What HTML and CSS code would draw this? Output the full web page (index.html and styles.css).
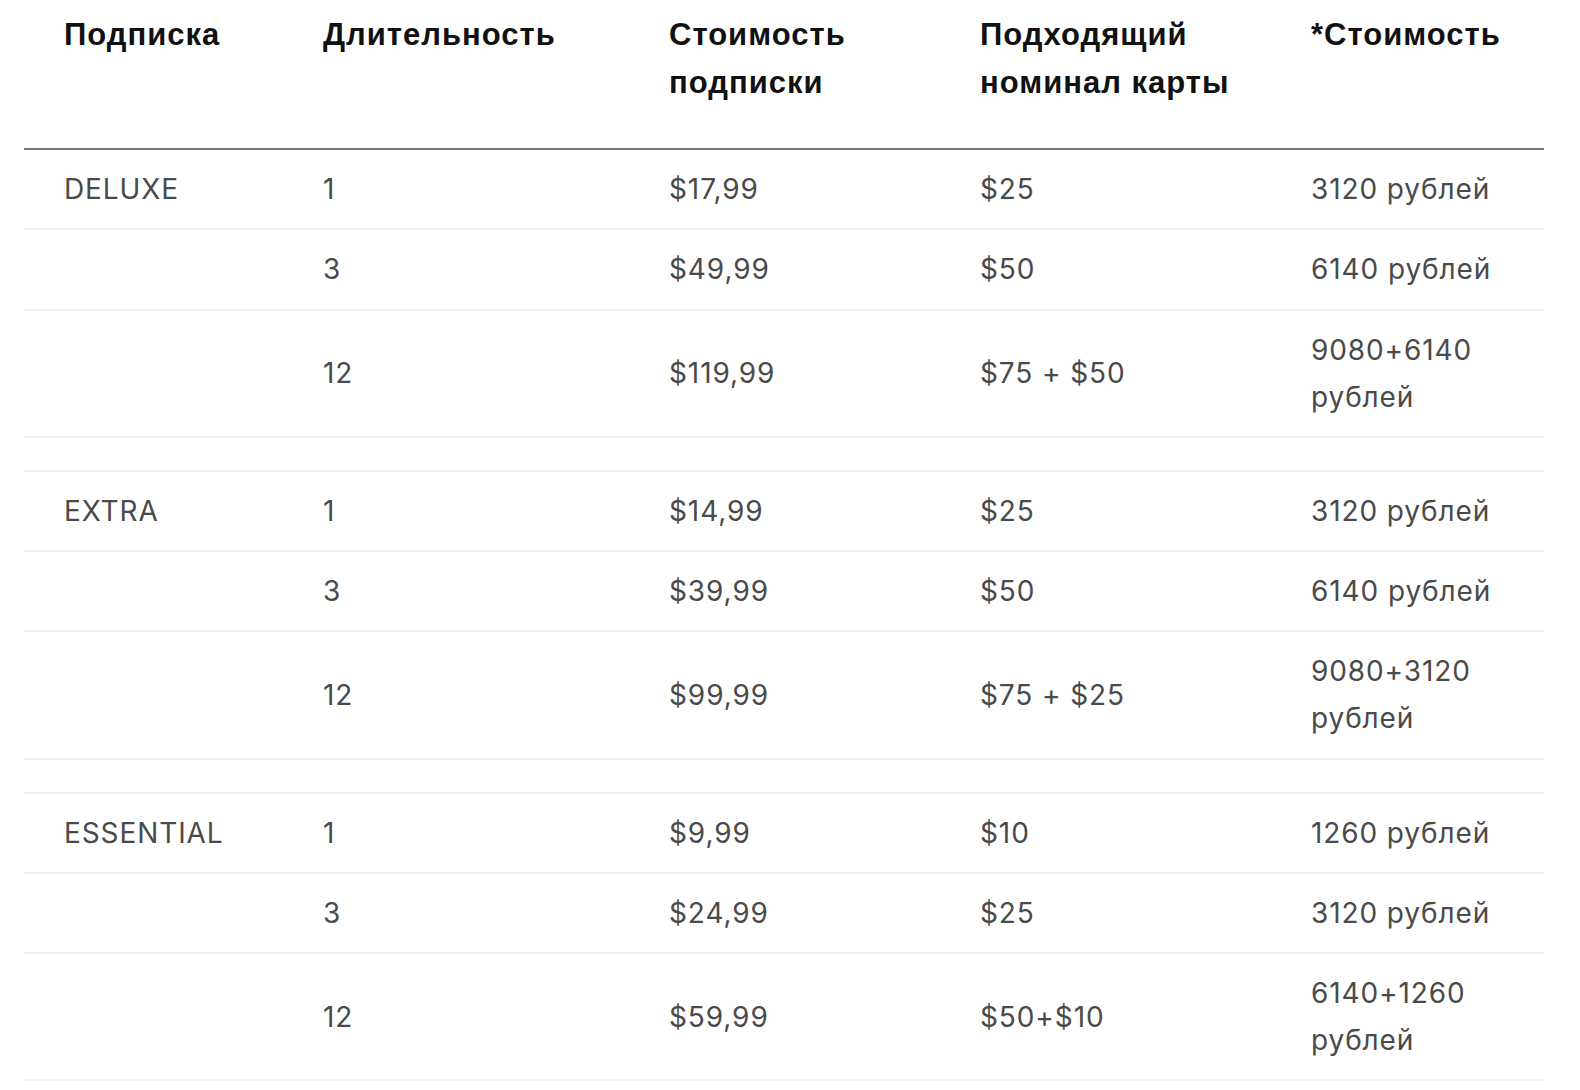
FILE: index.html
```html
<!DOCTYPE html>
<html lang="ru">
<head>
<meta charset="utf-8">
<title>Подписки</title>
<link rel="stylesheet" href="styles.css">
</head>
<body>
<table class="price-table">
  <colgroup>
    <col class="c1"><col class="c2"><col class="c3"><col class="c4"><col class="c5">
  </colgroup>
  <thead>
    <tr>
      <th>Подписка</th>
      <th>Длительность</th>
      <th>Стоимость подписки</th>
      <th>Подходящий номинал карты</th>
      <th>*Стоимость</th>
    </tr>
  </thead>
  <tbody>
    <tr><td>DELUXE</td><td>1</td><td>$17,99</td><td>$25</td><td>3120 рублей</td></tr>
    <tr><td></td><td>3</td><td>$49,99</td><td>$50</td><td>6140 рублей</td></tr>
    <tr><td></td><td>12</td><td>$119,99</td><td>$75 + $50</td><td>9080+6140 рублей</td></tr>
    <tr class="spacer"><td></td><td></td><td></td><td></td><td></td></tr>
    <tr><td>EXTRA</td><td>1</td><td>$14,99</td><td>$25</td><td>3120 рублей</td></tr>
    <tr><td></td><td>3</td><td>$39,99</td><td>$50</td><td>6140 рублей</td></tr>
    <tr><td></td><td>12</td><td>$99,99</td><td>$75 + $25</td><td>9080+3120 рублей</td></tr>
    <tr class="spacer"><td></td><td></td><td></td><td></td><td></td></tr>
    <tr><td>ESSENTIAL</td><td>1</td><td>$9,99</td><td>$10</td><td>1260 рублей</td></tr>
    <tr><td></td><td>3</td><td>$24,99</td><td>$25</td><td>3120 рублей</td></tr>
    <tr><td></td><td>12</td><td>$59,99</td><td>$50+$10</td><td>6140+1260 рублей</td></tr>
  </tbody>
</table>
</body>
</html>
```
FILE: styles.css
```css
html, body {
  margin: 0;
  padding: 0;
  background: #ffffff;
}
body {
  padding: 0 36px 0 24px;
  font-family: Inter, "Noto Sans", "Liberation Sans", sans-serif;
}
.price-table {
  width: 1520px;
  border-collapse: collapse;
  table-layout: fixed;
}
.c1 { width: 259px; }
.c2 { width: 346px; }
.c3 { width: 311px; }
.c4 { width: 331px; }
.c5 { width: 273px; }

.price-table th {
  text-align: left;
  vertical-align: top;
  font-family: "Liberation Sans", Arial, sans-serif;
  font-size: 31px;
  font-weight: 700;
  letter-spacing: 1px;
  line-height: 48px;
  color: #111111;
  padding: 11px 10px 41px 40px;
  border-bottom: 2px solid #777777;
}
.price-table td {
  font-size: 28px;
  font-weight: 400;
  letter-spacing: 0.9px;
  line-height: 47px;
  color: #4a4a4a;
  padding: 16px 10px 15.25px 40px;
  border-bottom: 2px solid #f2f2f2;
  vertical-align: middle;
}
.price-table tr.spacer td {
  padding: 16px 0;
}
```
